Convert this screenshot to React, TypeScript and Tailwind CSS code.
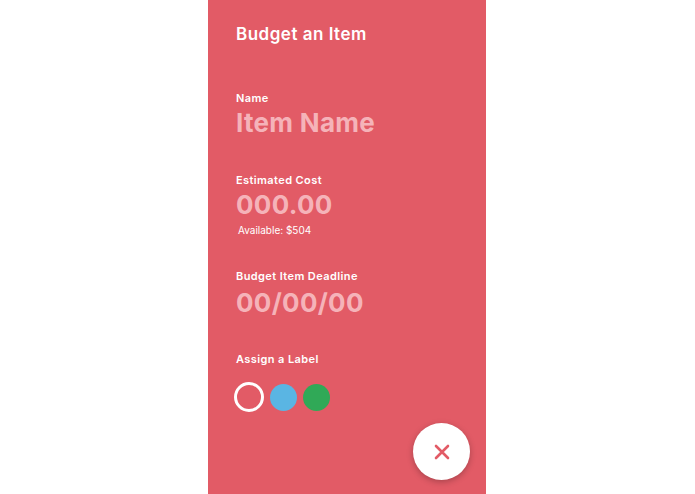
import React from "react";

const labels = [
  { id: "none", cls: "w-[30px] h-[30px] border-[3px] border-white" },
  { id: "blue", cls: "w-[27px] h-[27px] bg-[#5ab5e3]" },
  { id: "green", cls: "w-[27px] h-[27px] bg-[#30a957]" },
];

const Field = ({
  label,
  placeholder,
  className = "",
  gap = "mt-[3px]",
}: {
  label: string;
  placeholder: string;
  className?: string;
  gap?: string;
}) => (
  <div className={className}>
    <div className="text-[11px] leading-[14px] font-semibold tracking-[0.4px] text-white">{label}</div>
    <div className={`${gap} text-[26px] leading-[30px] font-bold tracking-[0.3px] text-[#f5b3b9]`}>
      {placeholder}
    </div>
  </div>
);

export default function App() {
  return (
    <div className="w-[695px] h-[494px] bg-white" style={{ fontFamily: "Inter, 'Noto Sans', sans-serif" }}>
      <div className="relative ml-[208px] w-[278px] h-full bg-[#e25b66] pl-[28px] pt-[24px]">
        <h1 className="text-[17px] leading-[20px] font-semibold tracking-[0.5px] text-white">Budget an Item</h1>

        <Field label="Name" placeholder="Item Name" className="mt-[47px]" />

        <Field label="Estimated Cost" placeholder="000.00" className="mt-[35px]" />
        <div className="pl-[2px] mt-[4px] text-[10px] leading-[12px] text-white">Available: $504</div>

        <Field label="Budget Item Deadline" placeholder="00/00/00" className="mt-[33px]" gap="mt-[5px]" />

        <div className="mt-[34px] text-[11px] leading-[14px] font-semibold tracking-[0.4px] text-white">Assign a Label</div>
        <div className="mt-[16px] flex items-center gap-[6px] -ml-[2px]">
          {labels.map((l) => (
            <span key={l.id} className={`rounded-full ${l.cls}`} />
          ))}
        </div>

        <button className="absolute right-[16px] bottom-[14px] w-[57px] h-[57px] rounded-full bg-white shadow-[0_2px_6px_rgba(0,0,0,0.25)] flex items-center justify-center">
          <svg width="16" height="16" viewBox="0 0 16 16" fill="none" stroke="#e25b66" strokeWidth="2.6" strokeLinecap="round">
            <path d="M2 2L14 14M14 2L2 14" />
          </svg>
        </button>
      </div>
    </div>
  );
}
